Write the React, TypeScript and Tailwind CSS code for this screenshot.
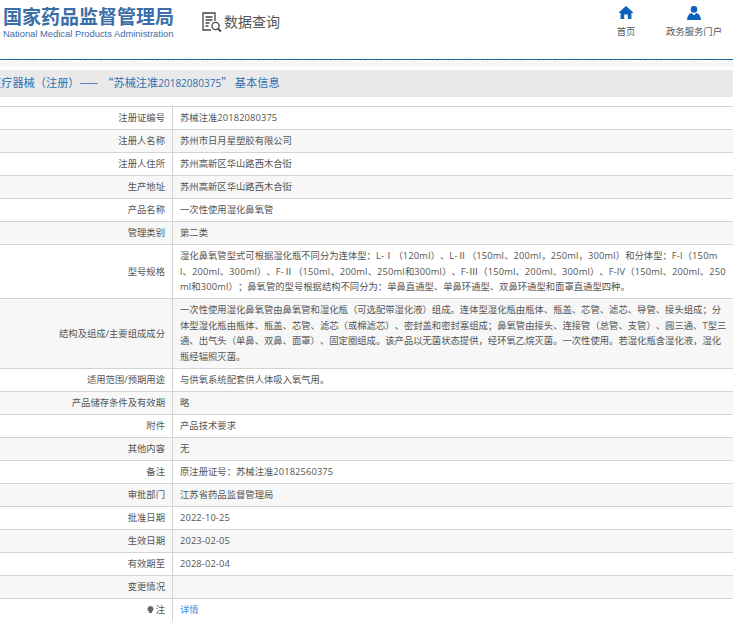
const Latin = ({ text, wide }: { text: string; wide?: boolean }) => (
  <>
    {text.split(/([A-Za-z0-9\-]+)/).map((part, i) =>
      i % 2 === 1 ? (
        <span key={i} className={wide ? 'tracking-[0.18px]' : 'tracking-[0.12px]'}>{part}</span>
      ) : (
        part
      )
    )}
  </>
);

const Row = ({ label, children, odd }: { label: React.ReactNode; children?: React.ReactNode; odd: boolean }) => (
  <div className={`flex border-b border-[#d4d4d4] ${odd ? 'bg-[#f7f7f7]' : 'bg-white'}`}>
    <div className="w-[172px] shrink-0 flex items-center justify-end pr-[7px] text-[#555]">{label}</div>
    <div className="flex-1 min-w-0 border-l border-[#d4d4d4] pl-[7px] pr-[6px] py-[3.25px] min-h-[22px] text-[#555] break-all whitespace-pre-line">{children}</div>
  </div>
);

const data: [string, string][] = [
  ['注册证编号', '苏械注准20182080375'],
  ['注册人名称', '苏州市日月星塑胶有限公司'],
  ['注册人住所', '苏州高新区华山路西木合街'],
  ['生产地址', '苏州高新区华山路西木合街'],
  ['产品名称', '一次性使用湿化鼻氧管'],
  ['管理类别', '第二类'],
  ['型号规格', '湿化鼻氧管型式可根据湿化瓶不同分为连体型：L-Ⅰ（120ml）、L-Ⅱ（150ml、200ml，250ml，300ml）和分体型：F-I（150m\nl、200ml、300ml）、F-Ⅱ（150ml、200ml、250ml和300ml）、F-Ⅲ（150ml、200ml、300ml）、F-IV（150ml、200ml、250\nml和300ml）；鼻氧管的型号根据结构不同分为：单鼻直通型、单鼻环通型、双鼻环通型和面罩直通型四种。'],
  ['结构及组成/主要组成成分', '一次性使用湿化鼻氧管由鼻氧管和湿化瓶（可选配带湿化液）组成。连体型湿化瓶由瓶体、瓶盖、芯管、滤芯、导管、接头组成；分体型湿化瓶由瓶体、瓶盖、芯管、滤芯（或棉滤芯）、密封盖和密封塞组成；鼻氧管由接头、连接管（总管、支管）、圆三通、T型三通、出气头（单鼻、双鼻、面罩）、固定圈组成。该产品以无菌状态提供，经环氧乙烷灭菌。一次性使用。若湿化瓶含湿化液，湿化瓶经辐照灭菌。'],
  ['适用范围/预期用途', '与供氧系统配套供人体吸入氧气用。'],
  ['产品储存条件及有效期', '略'],
  ['附件', '产品技术要求'],
  ['其他内容', '无'],
  ['备注', '原注册证号：苏械注准20182560375'],
  ['审批部门', '江苏省药品监督管理局'],
  ['批准日期', '2022-10-25'],
  ['生效日期', '2023-02-05'],
  ['有效期至', '2028-02-04'],
  ['变更情况', ''],
];

export default function App() {
  return (
    <div className="h-[621px] overflow-hidden bg-white text-[9.33px] leading-[15.5px] [text-spacing-trim:space-all] font-['Open_Sans','Noto_Sans_CJK_SC',sans-serif]">
      <header className="h-[60px] flex border-b border-[#1f6aa5]">
        <div className="pl-[3px] pt-[4px] w-[202px] shrink-0">
          <div className="text-[19px] leading-[23px] font-bold text-[#3b6ea8] font-['Noto_Sans_CJK_SC',sans-serif] whitespace-nowrap">国家药品监督管理局</div>
          <div className="text-[9.4px] leading-[12px] mt-[1px] text-[#3b6ea8] font-['Liberation_Sans',sans-serif] whitespace-nowrap">National Medical Products Administration</div>
        </div>
        <div className="flex items-start pt-[12px] gap-[1px] text-[#555] flex-1">
          <svg width="21" height="20" viewBox="0 0 21 20" fill="none" stroke="#444" strokeWidth="1.3">
            <path d="M13 9V1H1v17h8" />
            <path d="M3.5 5h7M3.5 8h7M3.5 11h4M3.5 14h3" />
            <circle cx="13.5" cy="14" r="3.6" />
            <path d="M16 16.8l3 2.6" strokeWidth="2" />
          </svg>
          <span className="text-[14px] leading-[18px] font-['Noto_Sans_CJK_SC',sans-serif]">数据查询</span>
        </div>
        <nav className="flex items-start pt-[6px] text-[#555] pr-[11px]">
          <div className="flex flex-col items-center w-[20px] mr-[30px]">
            <svg width="14" height="13" viewBox="0 0 14 13" fill="#0b62b8">
              <path d="M7 0L0 6.2V7h1.6v6H5.2V8.6h3.6V13h3.6V7H14v-.8z" />
            </svg>
            <span className="mt-[5px] whitespace-nowrap">首页</span>
          </div>
          <div className="flex flex-col items-center w-[56px]">
            <svg width="14" height="14" viewBox="0 0 14 14" fill="#0b62b8">
              <circle cx="7" cy="3.4" r="3.3" />
              <path d="M0 14c.3-4 2-6.2 4.6-7L7 9.2 9.4 7c2.6.8 4.3 3 4.6 7z" />
            </svg>
            <span className="mt-[4px] whitespace-nowrap">政务服务门户</span>
          </div>
        </nav>
      </header>
      <div className="h-[3px] bg-[repeating-linear-gradient(135deg,#ececec_0,#ececec_1px,#fff_1px,#fff_3px)]" />
      <div className="h-[7px] bg-gradient-to-b from-[#f5f5f5] to-white" />
      <div className="h-[27px] bg-[#e9e9e9] overflow-hidden flex items-center whitespace-nowrap text-[11.2px] text-[#2f6fb0] font-['Noto_Sans_CJK_SC',sans-serif]">
        <span className="-ml-[10px]">
          医疗器械（注册）<span className="tracking-[2px] mr-[2px]">——</span>“苏械注准<span className="text-[10px] font-['Open_Sans',sans-serif]">20182080375</span>” 基本信息
        </span>
      </div>
      <div className="h-[9px]" />
      <div className="border-t border-[#d4d4d4]">
        {data.map(([label, value], i) => (
          <Row key={label} label={label} odd={i % 2 === 1}>
            <Latin text={value} wide={label === '型号规格'} />
          </Row>
        ))}
        <Row
          label={
            <span className="flex items-center gap-[2px]">
              <svg width="7" height="8" viewBox="0 0 7 8" fill="#666">
                <path d="M3.5 0a3 3 0 0 1 1.5 5.6V7H2V5.6A3 3 0 0 1 3.5 0z" />
              </svg>
              注
            </span>
          }
          odd={false}
        >
          <span className="text-[#3a8ee6]">详情</span>
        </Row>
      </div>
    </div>
  );
}
